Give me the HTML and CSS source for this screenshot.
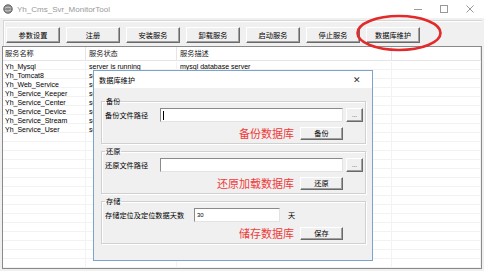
FILE: index.html
```html
<!DOCTYPE html>
<html lang="zh-CN">

<head>
    <meta charset="UTF-8">
    <meta name="viewport" content="width=device-width, initial-scale=1.0">
    <title>Yh_Cms_Svr_MonitorTool</title>
    <link rel="stylesheet" href="styles.css">
</head>

<body>
    <div class="window">
        <!-- barra de título -->
        <div class="titlebar">
            <svg class="app-icon" viewBox="0 0 10 10">
                <circle cx="5" cy="5" r="4.3" fill="#8a8a8a" stroke="#555" stroke-width="0.8"/>
                <path d="M2 4 Q5 2 8 4 M2 6.5 Q5 8 8 6" stroke="#ddd" stroke-width="0.8" fill="none"/>
            </svg>
            <span class="title">Yh_Cms_Svr_MonitorTool</span>
            <div class="controls">
                <span><svg width="10" height="10"><line x1="1" y1="5.5" x2="9" y2="5.5" stroke="#999"/></svg></span>
                <span><svg width="10" height="10"><rect x="1.5" y="1.5" width="7" height="7" fill="none" stroke="#999"/></svg></span>
                <span><svg width="10" height="10"><path d="M1.5 1.5 L8.5 8.5 M8.5 1.5 L1.5 8.5" stroke="#999"/></svg></span>
            </div>
        </div>

        <div class="toolbar">
            <div class="toolbar-panel">
                <button class="btn">参数设置</button>
                <button class="btn">注册</button>
                <button class="btn">安装服务</button>
                <button class="btn">卸载服务</button>
                <button class="btn">启动服务</button>
                <button class="btn">停止服务</button>
                <button class="btn">数据库维护</button>
            </div>
        </div>

        <div class="list">
            <div class="list-head">
                <div class="cell">服务名称</div>
                <div class="cell">服务状态</div>
                <div class="cell">服务描述</div>
                <div class="cell"></div>
            </div>
            <div class="list-body">
                <div class="col">
                    <div class="row">Yh_Mysql</div>
                    <div class="row">Yh_Tomcat8</div>
                    <div class="row">Yh_Web_Service</div>
                    <div class="row">Yh_Service_Keeper</div>
                    <div class="row">Yh_Service_Center</div>
                    <div class="row">Yh_Service_Device</div>
                    <div class="row">Yh_Service_Stream</div>
                    <div class="row">Yh_Service_User</div>
                </div>
                <div class="col">
                    <div class="row">server is running</div>
                    <div class="row">server is running</div>
                    <div class="row">server is running</div>
                    <div class="row">server is running</div>
                    <div class="row">server is running</div>
                    <div class="row">server is running</div>
                    <div class="row">server is running</div>
                    <div class="row">server is running</div>
                </div>
                <div class="col">
                    <div class="row">mysql database server</div>
                </div>
                <div class="col"></div>
            </div>
        </div>

        <!-- ventana de diálogo -->
        <div class="dialog">
            <div class="dialog-title">
                <span>数据库维护</span>
                <span class="dialog-close">✕</span>
            </div>
            <div class="dialog-body">
                <fieldset class="group">
                    <legend>备份</legend>
                    <div class="row-field">
                        <span class="field-label">备份文件路径</span>
                        <span class="input path"><span class="caret"></span></span>
                        <button class="btn btn-dots">...</button>
                    </div>
                    <div class="row-action">
                        <span class="note">备份数据库</span>
                        <button class="btn btn-small">备份</button>
                    </div>
                </fieldset>
                <fieldset class="group">
                    <legend>还原</legend>
                    <div class="row-field">
                        <span class="field-label">还原文件路径</span>
                        <span class="input path"></span>
                        <button class="btn btn-dots">...</button>
                    </div>
                    <div class="row-action">
                        <span class="note">还原加载数据库</span>
                        <button class="btn btn-small">还原</button>
                    </div>
                </fieldset>
                <fieldset class="group">
                    <legend>存储</legend>
                    <div class="row-field">
                        <span class="field-label wide">存储定位及定位数据天数</span>
                        <span class="input days">30</span>
                        <span class="unit">天</span>
                    </div>
                    <div class="row-action">
                        <span class="note">储存数据库</span>
                        <button class="btn btn-small">保存</button>
                    </div>
                </fieldset>
            </div>
        </div>

        <svg class="mark" viewBox="0 0 90 40">
            <ellipse cx="45" cy="20" rx="41.5" ry="17" fill="none" stroke="#e22a2a" stroke-width="2.6"/>
        </svg>
    </div>
</body>

</html>
```

FILE: styles.css
```css
* {
    margin: 0;
    padding: 0;
    box-sizing: border-box;
}

body {
    width: 484px;
    height: 271px;
    overflow: hidden;
    background: #f0f0f0;
    font-family: "Liberation Sans", "Noto Sans CJK SC", sans-serif;
    font-size: 7px;
    color: #000;
}

.window {
    position: relative;
    height: 271px;
    display: flex;
    flex-direction: column;
}

.titlebar {
    height: 18px;
    background: #fff;
    display: flex;
    align-items: center;
    padding-left: 3px;
}

.app-icon {
    width: 10px;
    height: 10px;
    margin-right: 4px;
}

.title {
    color: #999;
    font-size: 8px;
}

.controls {
    margin-left: auto;
    margin-right: 1px;
    display: flex;
}

.controls span {
    width: 26px;
    height: 18px;
    display: flex;
    align-items: center;
    justify-content: center;
}

.toolbar {
    height: 28px;
    padding: 2px 2px 0 3px;
}

.toolbar-panel {
    height: 100%;
    border-top: 1px solid #d5d5d5;
    border-left: 1px solid #d5d5d5;
    box-shadow: inset 1px 1px #fff;
    padding: 6px 0 0 2px;
    display: flex;
    gap: 6px;
}

.btn {
    font-family: "Noto Sans CJK SC", "Liberation Sans", sans-serif;
    font-size: 7.2px;
    color: #000;
    background: #f0f0f0;
    border: 1px solid;
    border-color: #fff #6a6a6a #6a6a6a #fff;
    box-shadow: inset -1px -1px #a0a0a0;
    display: flex;
    align-items: center;
    justify-content: center;
}

.toolbar .btn {
    width: 54px;
    height: 16px;
}

.list {
    flex: 1;
    margin: 0 2px 2px 2px;
    background: #fff;
    border: 1px solid #8a8a8a;
    display: flex;
    flex-direction: column;
}

.list-head,
.list-body {
    display: grid;
    grid-template-columns: 83px 91px 215px 1fr;
}

.list-head {
    height: 14px;
    border-bottom: 1px solid #e5e5e5;
}

.list-head .cell {
    font-family: "Noto Sans CJK SC", sans-serif;
    font-size: 7.2px;
    color: #222;
    border-right: 1px solid #e5e5e5;
    padding-left: 2px;
    line-height: 13px;
}

.list-head .cell:nth-child(2),
.list-head .cell:nth-child(3) {
    padding-left: 3px;
}

.list-body {
    flex: 1;
    padding-top: 1px;
    background: repeating-linear-gradient(to bottom, transparent 0 8px, #f2f2f2 8px 9px);
}

.col {
    border-right: 1px solid #f2f2f2;
}

.row {
    height: 9px;
    line-height: 9px;
    padding-left: 2px;
    white-space: nowrap;
    overflow: hidden;
}

.col:nth-child(2) .row,
.col:nth-child(3) .row {
    padding-left: 3px;
}

.dialog {
    position: absolute;
    left: 93px;
    top: 70px;
    width: 280px;
    height: 191px;
    border: 1px solid #7ba3cc;
    background: #f0f0f0;
    display: flex;
    flex-direction: column;
    font-family: "Noto Sans CJK SC", "Liberation Sans", sans-serif;
    font-size: 7.2px;
}

.dialog-title {
    height: 17px;
    background: #fff;
    display: flex;
    align-items: center;
    justify-content: space-between;
    padding-left: 5px;
}

.dialog-close {
    width: 22px;
    text-align: center;
    font-size: 9px;
    color: #333;
    margin-right: 4px;
}

.dialog-body {
    flex: 1;
    padding: 8px 6px 0 7px;
    display: flex;
    flex-direction: column;
    gap: 2px;
}

.group {
    border: 1px solid #d0d0d0;
    box-shadow: inset 1px 1px #fff, 1px 1px #fff;
    padding: 2px 1px 3px 3px;
    display: flex;
    flex-direction: column;
    gap: 4px;
}

.group legend {
    padding: 0 1px;
    line-height: 10px;
}

.row-field {
    height: 14px;
    display: flex;
    align-items: center;
}

.field-label {
    width: 55px;
}

.field-label.wide {
    width: 89px;
}

.input {
    height: 14px;
    background: #fff;
    border: 1px solid;
    border-color: #8a8a8a #e3e3e3 #e3e3e3 #8a8a8a;
    font-family: "Liberation Sans", sans-serif;
    font-size: 6px;
    line-height: 12px;
    padding-left: 2px;
    display: flex;
    align-items: center;
}

.path {
    width: 183px;
}

.days {
    width: 86px;
}

.caret {
    width: 1px;
    height: 9px;
    background: #000;
}

.unit {
    margin-left: 8px;
}

.btn-dots {
    width: 17px;
    height: 14px;
    margin-left: 3px;
    font-family: "Liberation Sans", sans-serif;
    font-size: 6px;
    align-items: flex-end;
    padding-bottom: 3px;
}

.row-action {
    height: 14px;
    display: flex;
    align-items: center;
    justify-content: flex-end;
    padding-right: 21px;
}

.note {
    font-size: 11px;
    color: #ee3b3b;
    margin-right: 6px;
}

.btn-small {
    width: 43px;
    height: 13px;
}

.mark {
    position: absolute;
    left: 354px;
    top: 13px;
    width: 90px;
    height: 40px;
}
```
